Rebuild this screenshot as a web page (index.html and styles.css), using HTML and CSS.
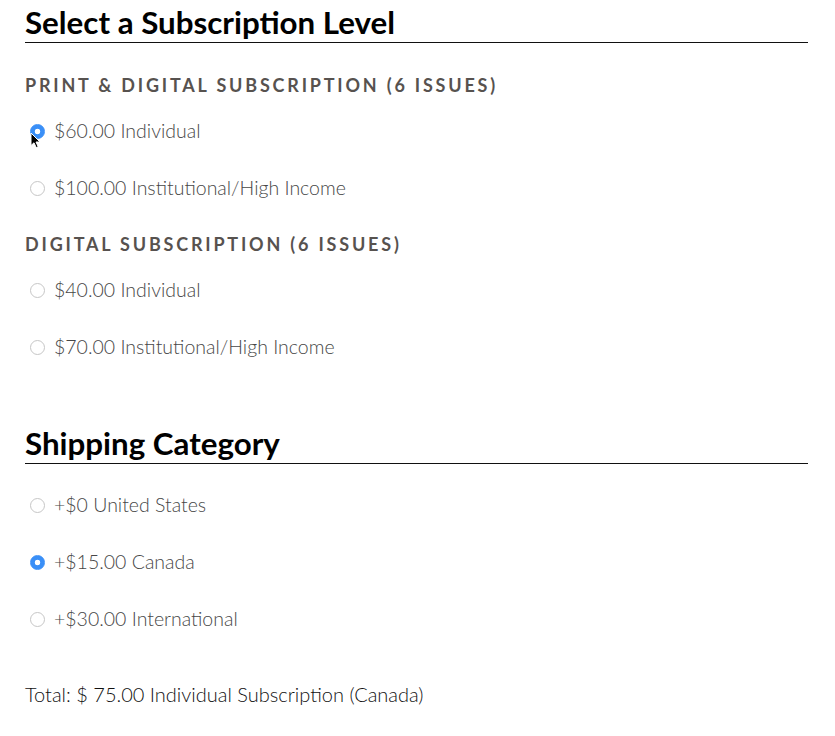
FILE: index.html
```html
<!DOCTYPE html>
<html lang="en">
<head>
<meta charset="utf-8">
<title>Subscription</title>
<link rel="stylesheet" href="styles.css">
</head>
<body>
<div class="page">
  <section class="section">
    <h2 class="section-title">Select a Subscription Level</h2>
    <h3 class="group-title">Print &amp; Digital Subscription (6 issues)</h3>
    <label class="option">
      <input type="radio" name="level" checked>
      <span>$60.00 Individual</span>
      <svg class="cursor" width="11" height="17" viewBox="0 0 11 17"><path d="M1 1 L1 13.5 L4 10.8 L6.2 15.6 L8.2 14.7 L6 10 L10 10 Z" fill="#000" stroke="#fff" stroke-width="1" stroke-linejoin="round"/></svg>
    </label>
    <label class="option">
      <input type="radio" name="level">
      <span>$100.00 Institutional/High Income</span>
    </label>
    <h3 class="group-title">Digital Subscription (6 issues)</h3>
    <label class="option">
      <input type="radio" name="level">
      <span>$40.00 Individual</span>
    </label>
    <label class="option">
      <input type="radio" name="level">
      <span>$70.00 Institutional/High Income</span>
    </label>
  </section>
  <section class="section">
    <h2 class="section-title">Shipping Category</h2>
    <label class="option">
      <input type="radio" name="ship">
      <span>+$0 United States</span>
    </label>
    <label class="option">
      <input type="radio" name="ship" checked>
      <span>+$15.00 Canada</span>
    </label>
    <label class="option">
      <input type="radio" name="ship">
      <span>+$30.00 International</span>
    </label>
  </section>
  <p class="total">Total: $ 75.00 Individual Subscription (Canada)</p>
</div>
</body>
</html>
```
FILE: styles.css
```css
html, body {
  margin: 0;
  padding: 0;
  background: #fff;
}
.page {
  width: 783px;
  padding: 4px 27px 0 25px;
  font-family: "Lato", "Source Sans Pro", sans-serif;
}
.section {
  display: flex;
  flex-direction: column;
}
.section + .section {
  margin-top: 64px;
}
.section-title {
  margin: 0;
  font-size: 31.3px;
  line-height: 36px;
  font-weight: 700;
  color: #000;
  padding-bottom: 2px;
  border-bottom: 1px solid #111;
}
.group-title {
  margin: 30px 0 18px;
  font-size: 18px;
  line-height: 24px;
  font-weight: 700;
  letter-spacing: 2.8px;
  text-transform: uppercase;
  color: #57524f;
}
.section-title + .group-title {
  margin-top: 30px;
}
.option {
  position: relative;
  display: flex;
  align-items: center;
  height: 30px;
  font-size: 19.5px;
  font-weight: 300;
  color: #474747;
}
.option + .option {
  margin-top: 27px;
}
.section-title + .option {
  margin-top: 25px;
}
.option input {
  appearance: none;
  -webkit-appearance: none;
  width: 15px;
  height: 15px;
  margin: 2px 9.5px 0 4.5px;
  border: 1px solid #c6c6c6;
  border-radius: 50%;
  background: #fff;
  flex: none;
}
.option input:checked {
  border-color: #3a8ff7;
  background: radial-gradient(circle, #fff 0 2.5px, #3a8ff7 3.1px);
}
.cursor {
  position: absolute;
  left: 5px;
  top: 17px;
}
.total {
  margin: 46px 0 0;
  font-size: 20px;
  font-weight: 300;
  line-height: 30px;
  color: #111;
}
```
